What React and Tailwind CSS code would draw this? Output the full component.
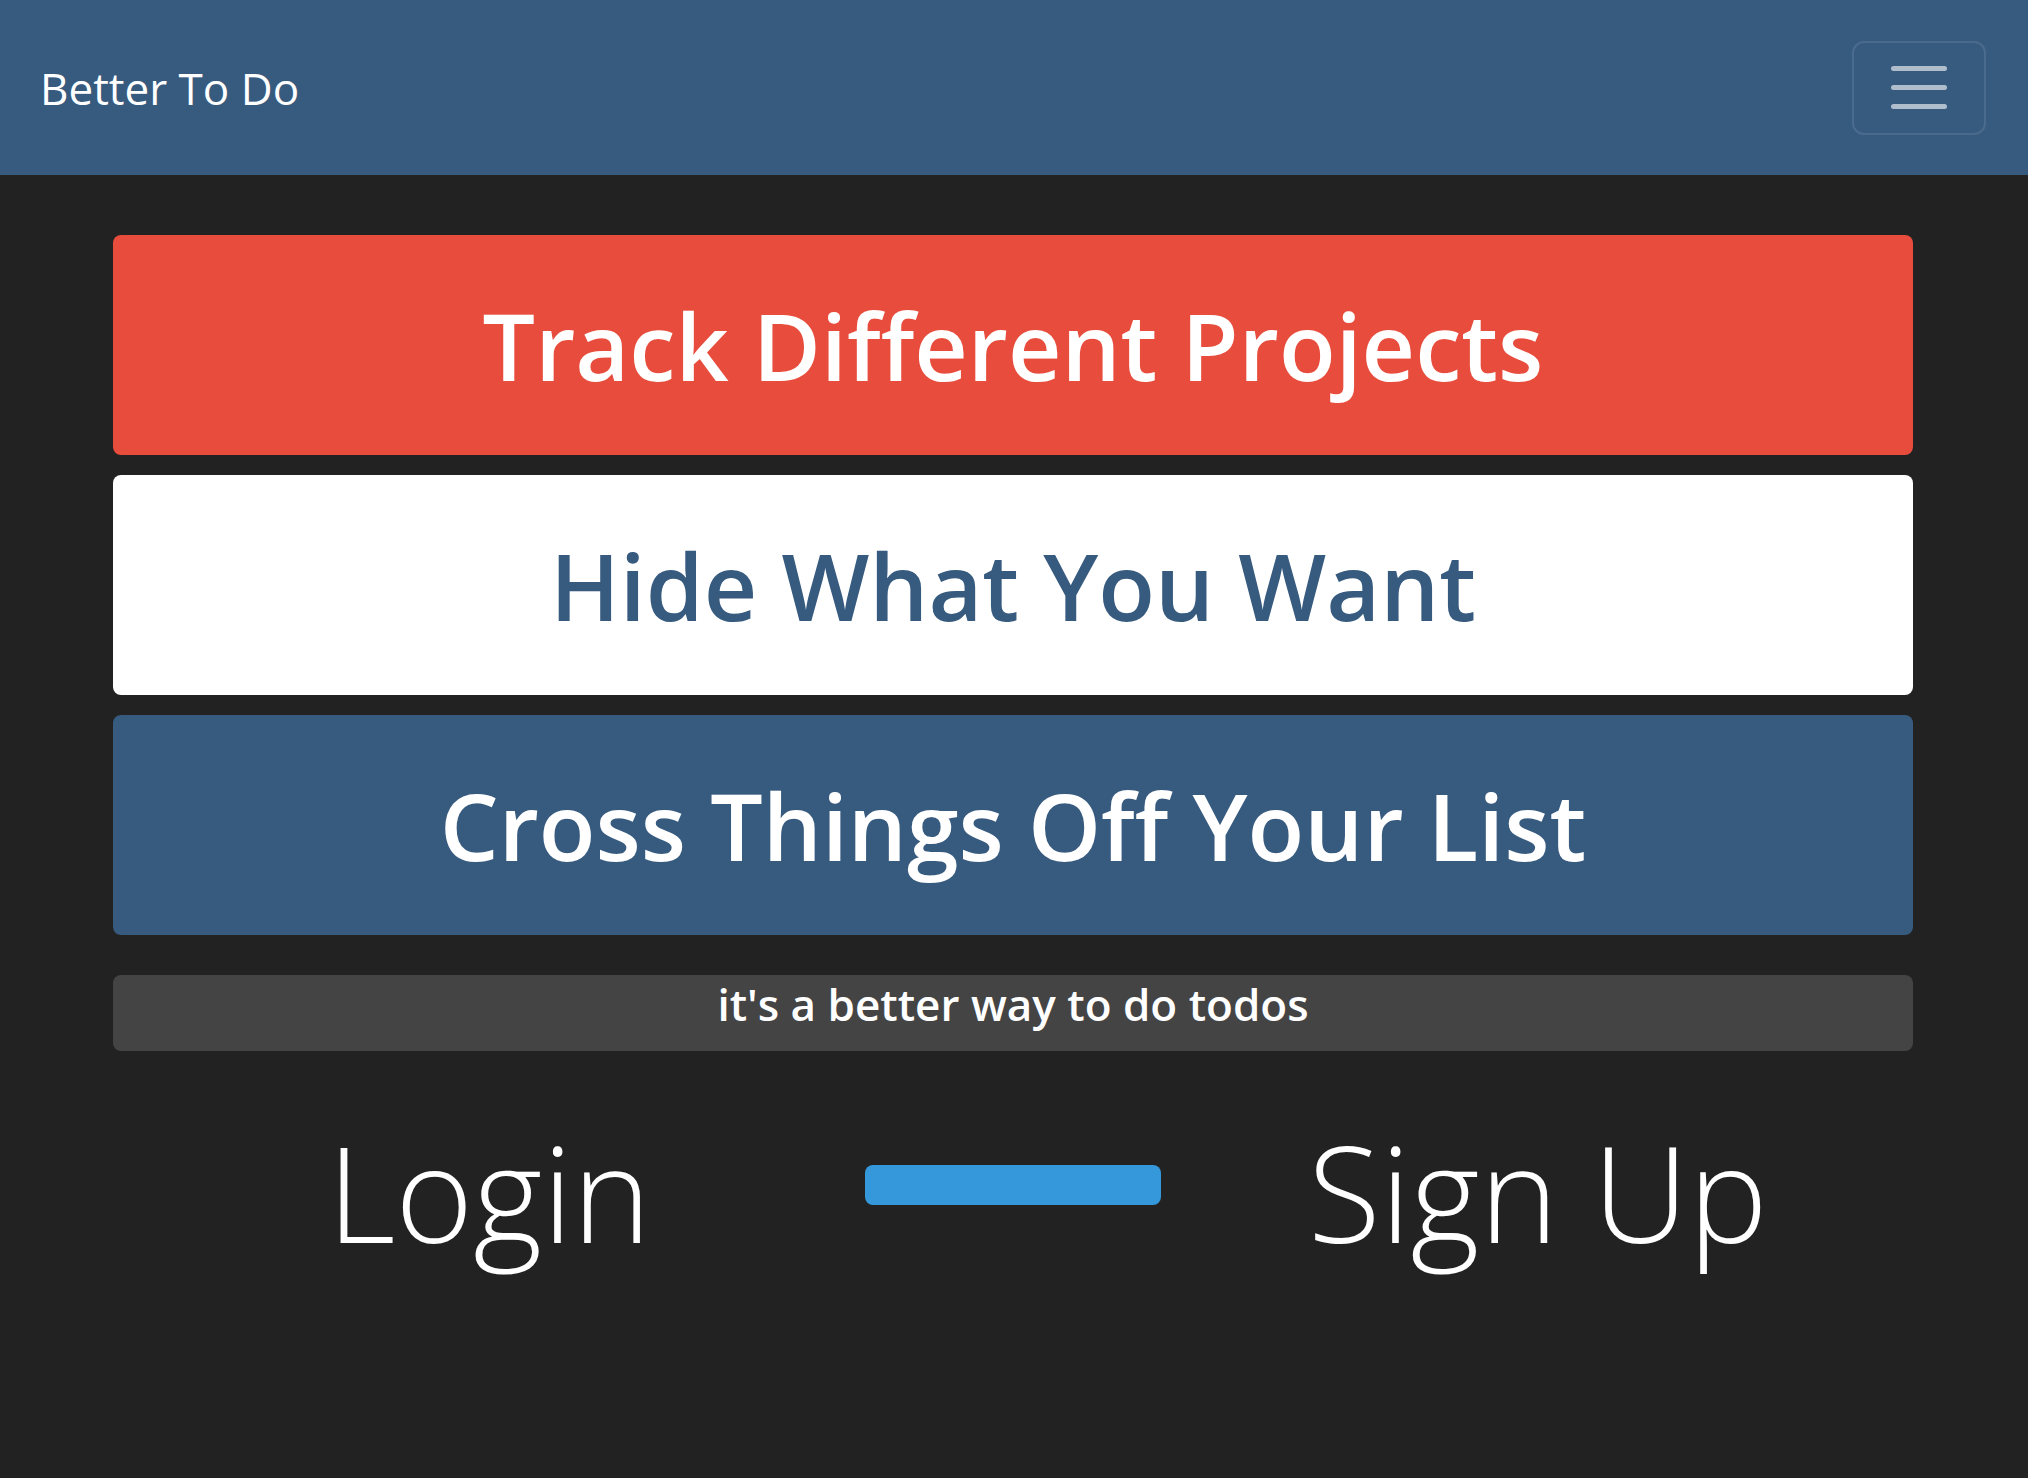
const cards = [
    { text: "Track Different Projects", cls: "bg-[#e74c3c] text-white" },
    { text: "Hide What You Want", cls: "bg-white text-[#375a7f]" },
    { text: "Cross Things Off Your List", cls: "bg-[#375a7f] text-white" },
];

export default function App() {
    return (
        <div className="min-h-screen bg-[#222222] font-['Open_Sans',sans-serif]">
            {/* NAVBAR */}
            <nav className="h-[175px] bg-[#375a7f] flex items-center justify-between pl-[40px] pr-[42px]">
                <a className="text-white text-[44px] leading-none">Better To Do</a>
                <button className="w-[134px] h-[94px] border-2 border-white/10 rounded-[12px] flex flex-col items-center justify-center gap-[14px]">
                    <span className="block w-[56px] h-[5px] rounded-full bg-white/60" />
                    <span className="block w-[56px] h-[5px] rounded-full bg-white/60" />
                    <span className="block w-[56px] h-[5px] rounded-full bg-white/60" />
                </button>
            </nav>

            {/* CONTENT */}
            <main className="w-[1800px] ml-[113px] pt-[60px]">
                <div className="flex flex-col gap-[20px]">
                    {cards.map((c) => (
                        <div
                            key={c.text}
                            className={`h-[220px] rounded-[8px] flex items-center justify-center ${c.cls}`}
                        >
                            <h1 className="text-[93px] font-semibold leading-none">{c.text}</h1>
                        </div>
                    ))}
                </div>

                <div className="mt-[40px] h-[76px] rounded-[8px] bg-[#444444] text-white text-center pt-[2px]">
                    <p className="text-[44px] font-semibold leading-[55px]">it's a better way to do todos</p>
                </div>

                <div className="mt-[74px] grid grid-cols-3 items-center">
                    <a className="text-right pr-[62px] text-white text-[133px] font-light leading-none">Login</a>
                    <div className="flex justify-center mb-[13px]">
                        <div className="w-[296px] h-[40px] rounded-[8px] bg-[#3498db]" />
                    </div>
                    <a className="text-left -ml-[5px] text-white text-[133px] font-light leading-none">Sign Up</a>
                </div>
            </main>
        </div>
    );
}
